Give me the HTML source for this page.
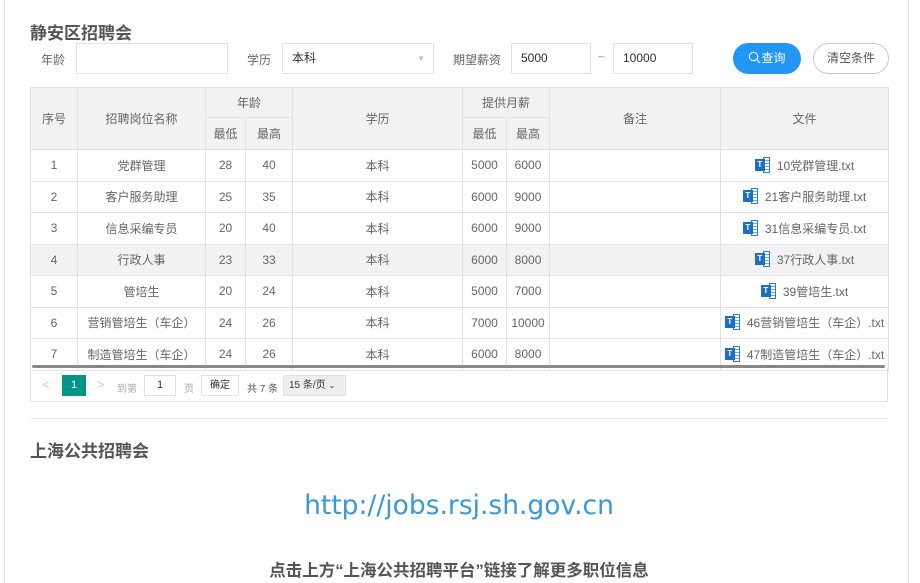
<!DOCTYPE html>
<html><head><meta charset="utf-8"><style>
*{margin:0;padding:0;box-sizing:border-box}
body{width:920px;height:583px;background:#fff;font-family:"Liberation Sans","Noto Sans CJK SC",sans-serif;color:#555;position:relative;overflow:hidden;font-size:12px}
.a{position:absolute}
.lb{position:absolute;left:4px;top:0;width:1px;height:583px;background:#e6e6e6}
.rb{position:absolute;left:908px;top:0;width:1px;height:583px;background:#e6e6e6}
h1{position:absolute;left:30px;top:19px;font-size:17px;font-weight:bold;color:#555}
.inp{position:absolute;border:1px solid #e2e2e2;height:31px;top:43px;background:#fff;font-size:12px;color:#333;line-height:29px;padding-left:9px}
table{position:absolute;left:30px;top:87px;border-collapse:collapse;table-layout:fixed;width:858px}
td,th{border:1px solid #e2e2e2;text-align:center;font-weight:normal;font-size:12px;color:#666;padding:0;white-space:nowrap}
th{background:#f2f2f2}
.hr1 th{height:30px}.hr2 th{height:32px}
tbody tr{height:31.5px}
tr.g td{background:#f2f2f2}
.ic{display:inline-block;width:15px;height:16px;vertical-align:-3px;margin-right:7px;position:relative}
.ic i{position:absolute;left:0;top:2px;width:10px;height:12px;background:#1e6fc1;color:#fff;font-size:8px;font-style:normal;line-height:12px;text-align:center;font-weight:bold;z-index:1}
.ic b{position:absolute;left:8px;top:0;width:7px;height:16px;border:1px solid #2a7fd0;background:repeating-linear-gradient(#fff 0 2px,#6aa8e0 2px 3px)}
</style></head><body>
<div class="lb"></div><div class="rb"></div>
<h1>静安区招聘会</h1>
<div class="a" style="left:41px;top:51px;color:#666">年龄</div>
<div class="inp" style="left:76px;width:152px"></div>
<div class="a" style="left:247px;top:51px;color:#666">学历</div>
<div class="inp" style="left:282px;width:152px">本科<span style="position:absolute;right:8px;top:0;color:#bbb;font-size:8px">▼</span></div>
<div class="a" style="left:453px;top:51px;color:#666">期望薪资</div>
<div class="inp" style="left:511px;width:80px">5000</div>
<div class="a" style="left:598px;top:50px;color:#999">~</div>
<div class="inp" style="left:613px;width:80px">10000</div>
<div class="a" style="left:733px;top:43px;width:68px;height:31px;border-radius:16px;background:#2196f3;color:#fff;line-height:31px;text-align:center">
<svg width="13" height="13" viewBox="0 0 13 13" style="vertical-align:-2px"><circle cx="5.5" cy="5.5" r="4.2" fill="none" stroke="#fff" stroke-width="1.1"/><path d="M8.5 8.5L12 12" stroke="#fff" stroke-width="1.2"/></svg>查询</div>
<div class="a" style="left:813px;top:43px;width:76px;height:31px;border-radius:16px;border:1px solid #ccc;color:#555;line-height:29px;text-align:center">清空条件</div>
<table>
<colgroup><col style="width:47px"><col style="width:128px"><col style="width:40px"><col style="width:47px"><col style="width:170px"><col style="width:44px"><col style="width:43px"><col style="width:171px"><col style="width:168px"></colgroup>
<thead>
<tr class="hr1"><th rowspan="2">序号</th><th rowspan="2">招聘岗位名称</th><th colspan="2">年龄</th><th rowspan="2">学历</th><th colspan="2">提供月薪</th><th rowspan="2">备注</th><th rowspan="2">文件</th></tr>
<tr class="hr2"><th>最低</th><th>最高</th><th>最低</th><th>最高</th></tr>
</thead>
<tbody>
<tr><td>1</td><td>党群管理</td><td>28</td><td>40</td><td>本科</td><td>5000</td><td>6000</td><td></td><td><span class="ic"><i>T</i><b></b></span>10党群管理.txt</td></tr>
<tr><td>2</td><td>客户服务助理</td><td>25</td><td>35</td><td>本科</td><td>6000</td><td>9000</td><td></td><td><span class="ic"><i>T</i><b></b></span>21客户服务助理.txt</td></tr>
<tr><td>3</td><td>信息采编专员</td><td>20</td><td>40</td><td>本科</td><td>6000</td><td>9000</td><td></td><td><span class="ic"><i>T</i><b></b></span>31信息采编专员.txt</td></tr>
<tr class="g"><td>4</td><td>行政人事</td><td>23</td><td>33</td><td>本科</td><td>6000</td><td>8000</td><td></td><td><span class="ic"><i>T</i><b></b></span>37行政人事.txt</td></tr>
<tr><td>5</td><td>管培生</td><td>20</td><td>24</td><td>本科</td><td>5000</td><td>7000</td><td></td><td><span class="ic"><i>T</i><b></b></span>39管培生.txt</td></tr>
<tr><td>6</td><td>营销管培生（车企）</td><td>24</td><td>26</td><td>本科</td><td>7000</td><td>10000</td><td></td><td><span class="ic"><i>T</i><b></b></span>46营销管培生（车企）.txt</td></tr>
<tr><td>7</td><td>制造管培生（车企）</td><td>24</td><td>26</td><td>本科</td><td>6000</td><td>8000</td><td></td><td><span class="ic"><i>T</i><b></b></span>47制造管培生（车企）.txt</td></tr>
</tbody></table>
<div class="a" style="left:32px;top:365px;width:853px;height:3px;background:#888;border-radius:2px"></div>
<div class="a" style="left:30px;top:368px;width:858px;height:34px;border:1px solid #e2e2e2;border-top:none"></div>
<div class="a" style="left:42px;top:377px;color:#ccc;font-size:13px">&lt;</div>
<div class="a" style="left:62px;top:375px;width:24px;height:21px;background:#009688;color:#fff;text-align:center;line-height:21px;font-size:11px">1</div>
<div class="a" style="left:97px;top:377px;color:#ccc;font-size:13px">&gt;</div>
<div class="a" style="left:117px;top:380px;color:#aaa;font-size:10px">到第</div>
<div class="a" style="left:144px;top:375px;width:32px;height:21px;border:1px solid #e2e2e2;text-align:center;line-height:19px;font-size:11px;color:#333">1</div>
<div class="a" style="left:184px;top:380px;color:#aaa;font-size:10px">页</div>
<div class="a" style="left:201px;top:375px;width:38px;height:21px;border:1px solid #e2e2e2;text-align:center;line-height:19px;font-size:10px;color:#333">确定</div>
<div class="a" style="left:247px;top:380px;color:#555;font-size:10px">共 7 条</div>
<div class="a" style="left:283px;top:375px;width:63px;height:21px;background:#eee;border:1px solid #e2e2e2;line-height:19px;font-size:10px;color:#333;padding-left:5px">15 条/页 <span style="font-size:8px">⌄</span></div>
<div class="a" style="left:30px;top:418px;width:858px;height:1px;background:#e6e6e6"></div>
<div class="a" style="left:30px;top:437px;font-size:17px;font-weight:bold;color:#555">上海公共招聘会</div>
<div class="a" style="left:0;width:918px;top:490px;text-align:center;font-size:26.5px;color:#3a97d9;font-family:'DejaVu Sans','Liberation Sans',sans-serif">http://jobs.rsj.sh.gov.cn</div>
<div class="a" style="left:0;width:918px;top:557px;text-align:center;font-size:16.5px;font-weight:bold;color:#555">点击上方“上海公共招聘平台”链接了解更多职位信息</div>
</body></html>
